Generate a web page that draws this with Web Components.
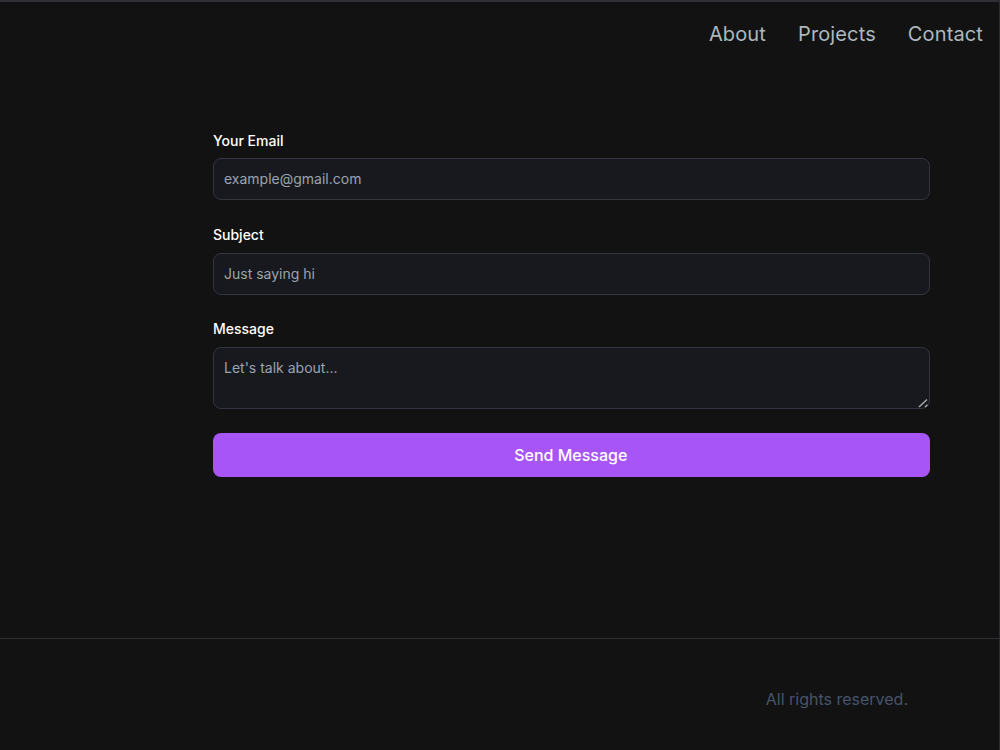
<!DOCTYPE html>
<html lang="en">
<head>
<meta charset="utf-8">
<title>Contact</title>
<style>
html,body{margin:0;padding:0;background:#121212;height:100%;}
body{font-family:Inter,"Liberation Sans",sans-serif;overflow:hidden;}
</style>
</head>
<body>
<site-page>
  <site-nav slot="nav">
    <nav-link>About</nav-link>
    <nav-link>Projects</nav-link>
    <nav-link>Contact</nav-link>
  </site-nav>
  <contact-form slot="main">
    <form-field label="Your Email" placeholder="example@gmail.com" type="email"></form-field>
    <form-field label="Subject" placeholder="Just saying hi" type="text"></form-field>
    <form-field label="Message" placeholder="Let's talk about..." type="area"></form-field>
    <send-button>Send Message</send-button>
  </contact-form>
  <site-footer slot="footer">All rights reserved.</site-footer>
</site-page>
<script>
function def(name, html, setup){
  customElements.define(name, class extends HTMLElement{
    constructor(){
      super();
      this.attachShadow({mode:'open'}).innerHTML = html;
    }
    connectedCallback(){ if(setup) setup(this); }
  });
}
def('site-page',`<style>
:host{display:flex;flex-direction:column;width:999px;height:750px;box-sizing:border-box;border-top:2px solid #2f3035;background:#121212;box-shadow:1px 0 0 #2a2b2f;}
main{flex:1;}
</style><slot name="nav"></slot><main><slot name="main"></slot></main><slot name="footer"></slot>`);
def('site-nav',`<style>
:host{display:flex;justify-content:flex-end;gap:32px;padding:18px 16px 0 0;height:65px;box-sizing:content-box;}
</style><slot></slot>`);
def('nav-link',`<style>
:host{display:block;font:400 20px/28px Inter,"Liberation Sans",sans-serif;letter-spacing:.13px;color:#adb7be;}
</style><slot></slot>`);
def('contact-form',`<style>
:host{display:flex;flex-direction:column;gap:24px;margin:45.6px 69.4px 0 213px;}
</style><slot></slot>`);
def('form-field',`<style>
:host{display:block;}
:host(:not([type=area])){padding-bottom:.8px;}
label{display:block;font:500 14px/20px Inter,"Liberation Sans",sans-serif;color:#fff;margin-bottom:7.6px;}
.box{display:block;position:relative;}
input,textarea{display:block;width:100%;box-sizing:border-box;margin:0;background:#18191e;border:1px solid #33353f;border-radius:8px;padding:10px;font:400 14px/20px Inter,"Liberation Sans",sans-serif;color:#f3f4f6;outline:none;}
input::placeholder,textarea::placeholder{color:#9ca3af;opacity:1;}
textarea{height:62px;resize:none;}
svg{position:absolute;right:1px;bottom:1px;width:12px;height:12px;}
</style><label id="l"></label><span class="box" id="c"></span>`, (el)=>{
  const s=el.shadowRoot, t=el.getAttribute('type'), box=s.getElementById('c');
  s.getElementById('l').textContent=el.getAttribute('label');
  const c=document.createElement(t==='area'?'textarea':'input');
  if(t==='area') c.rows=2; else c.type=t;
  c.placeholder=el.getAttribute('placeholder');
  box.appendChild(c);
  if(t==='area') box.insertAdjacentHTML('beforeend','<svg viewBox="0 0 12 12" fill="none" stroke="#a8a8a8" stroke-width="1.5"><path d="M2 11 10 3.5M8 11 10.5 8.8"/></svg>');
});
def('send-button',`<style>
:host{display:block;}
button{display:block;width:100%;height:44px;border:0;border-radius:8px;background:#a855f7;color:#fff;font:500 16px/24px Inter,"Liberation Sans",sans-serif;padding:0 1px 0 0;}
</style><button type="button"><slot></slot></button>`);
def('site-footer',`<style>
:host{display:flex;justify-content:flex-end;height:112px;box-sizing:border-box;border-top:1px solid #2f3035;padding:48px 91px 0 0;font:400 16px/24px Inter,"Liberation Sans",sans-serif;color:#475569;}
</style><slot></slot>`);
</script>
</body>
</html>
